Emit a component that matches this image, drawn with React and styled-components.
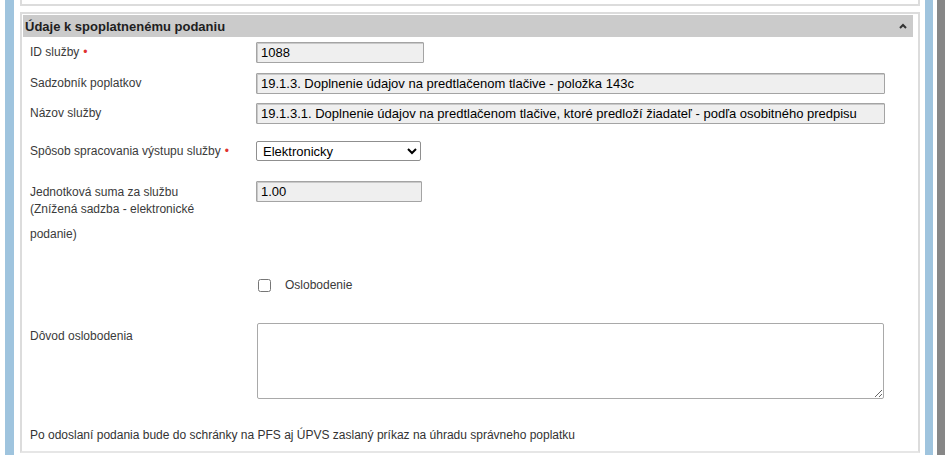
import styled, { createGlobalStyle } from "styled-components";

const GlobalStyle = createGlobalStyle`
    body {
        margin: 0;
        background: #ffffff;
        font-family: "Liberation Sans", Arial, sans-serif;
    }
`;

const Page = styled.div`
    display: flex;
    height: 455px;
    overflow: hidden;
    background: #fff;
`;

const Stripe = styled.div`
    width: ${(p) => p.$width}px;
    margin-left: ${(p) => p.$gap}px;
    background: ${(p) => p.$color};
    flex-shrink: 0;
`;

const Main = styled.div`
    width: 900px;
    margin-left: 6px;
    display: flex;
    flex-direction: column;
    flex-shrink: 0;
`;

const PrevPanelEnd = styled.div`
    height: 4px;
    border: 2px solid #dcdcdc;
    border-top: none;
`;

const Section = styled.section`
    margin-top: 6px;
    margin-bottom: 2px;
    flex: 1;
    border: 2px solid #dcdcdc;
    border-bottom-color: #e6e6e6;
    display: flex;
    flex-direction: column;
`;

const SectionHeader = styled.div`
    height: 22px;
    margin: 1px 5px 0 1px;
    background: #cbcbcb;
    display: flex;
    align-items: center;
    justify-content: space-between;
    padding: 0 6px 0 2px;

    h2 {
        margin: 0;
        font-size: 13px;
        font-weight: bold;
        color: #1e1e1e;
    }
`;

const Fields = styled.div`
    padding: 5px 0 0 8px;
    display: flex;
    flex-direction: column;
`;

const Row = styled.div`
    display: grid;
    grid-template-columns: 226px 1fr;
    align-items: ${(p) => p.$align || "center"};
    margin-top: ${(p) => p.$gap || 0}px;
`;

const Label = styled.label`
    font-size: 12px;
    line-height: 17px;
    color: #3a3a3a;
    padding-top: ${(p) => p.$offset || 0}px;

    .req {
        color: #e0322f;
        margin-left: 4px;
    }
`;

const LabelTail = styled.div`
    margin-top: 8px;
`;

const TextField = styled.input`
    box-sizing: border-box;
    width: ${(p) => p.$width}px;
    height: 21px;
    padding: 0 4px;
    font-family: "Liberation Sans", Arial, sans-serif;
    font-size: 13px;
    color: #000;
    background: #efefef;
    border: 1px solid #a4a4a4;
    box-shadow: inset 1px 1px 0 #c9c9c9;
    border-radius: 1px;
    outline: none;
`;

const Select = styled.select`
    box-sizing: border-box;
    width: 165px;
    height: 20px;
    font-family: "Liberation Sans", Arial, sans-serif;
    font-size: 13px;
    color: #000;
    background: #fff;
    border: 1px solid #8f8f8f;
    border-radius: 2px;
    padding: 0 2px;
`;

const CheckLine = styled.label`
    display: flex;
    align-items: center;
    gap: 14px;
    font-size: 12px;
    color: #3a3a3a;

    input {
        margin: 0 0 0 2px;
        width: 13px;
        height: 13px;
    }
`;

const TextArea = styled.textarea`
    box-sizing: border-box;
    width: 627px;
    height: 76px;
    margin-left: 1px;
    border: 1px solid #a9a9a9;
    border-radius: 2px;
    font-family: "Liberation Sans", Arial, sans-serif;
    font-size: 13px;
    resize: both;
`;

const Note = styled.p`
    margin: 28px 0 0;
    font-size: 12px;
    line-height: 17px;
    color: #333;
`;

const Caret = () => (
    <svg width="8" height="6" viewBox="0 0 8 6">
        <polyline points="1,5 4,2 7,5" fill="none" stroke="#333" strokeWidth="2" />
    </svg>
);

export default function App() {
    return (
        <>
            <GlobalStyle />
            <Page>
                <Stripe $width={9} $gap={5} $color="#9fc4de" />
                <Main>
                    <PrevPanelEnd />
                    <Section>
                        <SectionHeader>
                            <h2>Údaje k spoplatnenému podaniu</h2>
                            <Caret />
                        </SectionHeader>
                        <Fields>
                            <Row>
                                <Label>ID služby<span className="req">•</span></Label>
                                <TextField $width={168} readOnly value="1088" />
                            </Row>
                            <Row $gap={10}>
                                <Label>Sadzobník poplatkov</Label>
                                <TextField
                                    $width={629}
                                    readOnly
                                    value="19.1.3. Doplnenie údajov na predtlačenom tlačive - položka 143c"
                                />
                            </Row>
                            <Row $gap={9}>
                                <Label>Názov služby</Label>
                                <TextField
                                    $width={629}
                                    readOnly
                                    value="19.1.3.1. Doplnenie údajov na predtlačenom tlačive, ktoré predloží žiadateľ - podľa osobitného predpisu"
                                />
                            </Row>
                            <Row $gap={17}>
                                <Label>Spôsob spracovania výstupu služby<span className="req">•</span></Label>
                                <div>
                                    <Select defaultValue="el">
                                        <option value="el">Elektronicky</option>
                                        <option value="li">Listinne</option>
                                    </Select>
                                </div>
                            </Row>
                            <Row $gap={20} $align="start">
                                <Label $offset={3}>
                                    Jednotková suma za službu
                                    <br />
                                    (Znížená sadzba - elektronické
                                    <LabelTail>podanie)</LabelTail>
                                </Label>
                                <TextField $width={166} readOnly value="1.00" />
                            </Row>
                            <Row $gap={35}>
                                <span />
                                <CheckLine>
                                    <input type="checkbox" />
                                    Oslobodenie
                                </CheckLine>
                            </Row>
                            <Row $gap={31} $align="start">
                                <Label $offset={5}>Dôvod oslobodenia</Label>
                                <TextArea />
                            </Row>
                            <Note>
                                Po odoslaní podania bude do schránky na PFS aj ÚPVS zaslaný príkaz na úhradu správneho poplatku
                            </Note>
                        </Fields>
                    </Section>
                </Main>
                <Stripe $width={8} $gap={5} $color="#9fc4de" />
                <Stripe $width={8} $gap={4} $color="#878787" />
            </Page>
        </>
    );
}
